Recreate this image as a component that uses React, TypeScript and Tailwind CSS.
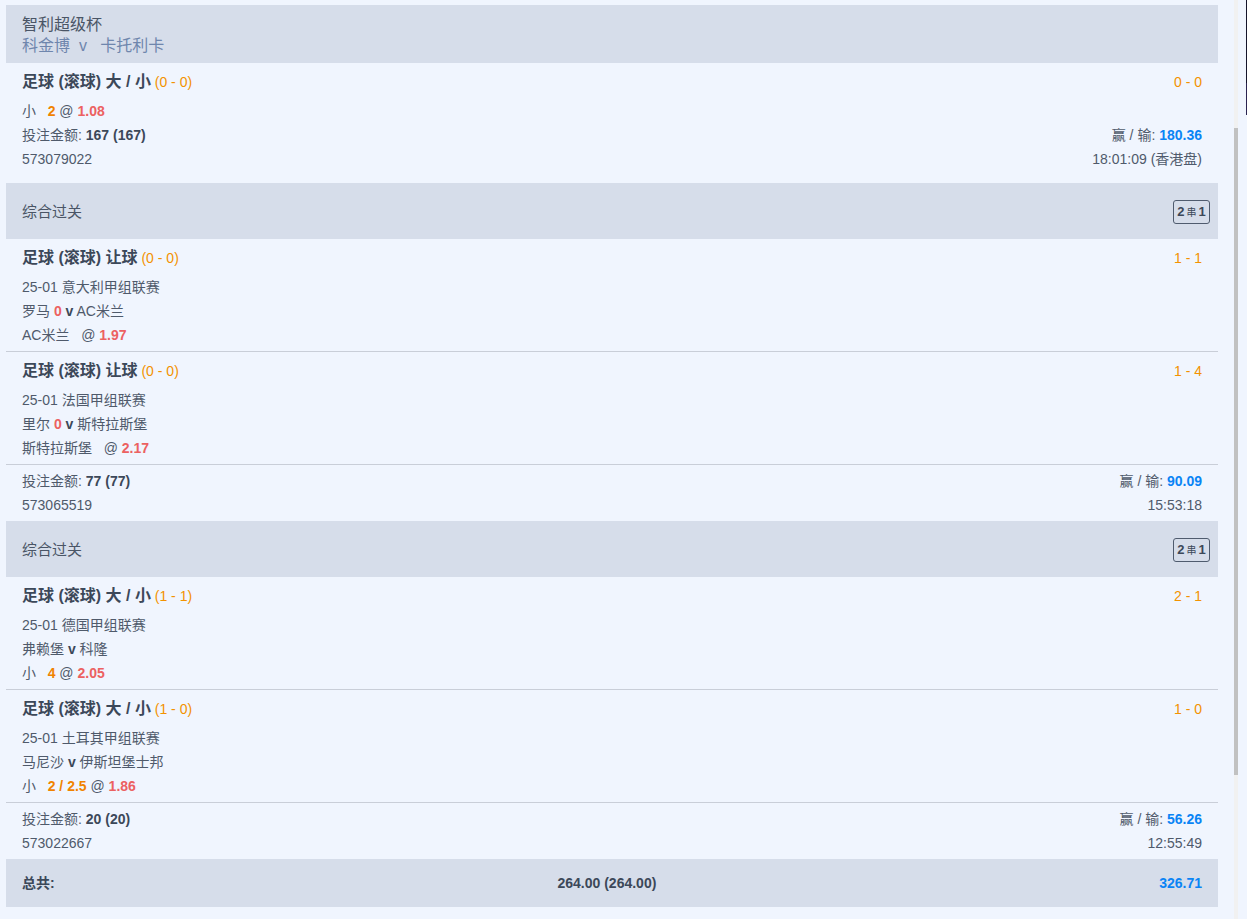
import React from "react";

type Leg = {
  market: string;
  live: string;
  score: string;
  league: string;
  home: string;
  homeGoals: string;
  away: string;
  pick: string;
  line?: string;
  odds: string;
};

type Parlay = {
  legs: Leg[];
  stake: string;
  win: string;
  id: string;
  time: string;
};

const parlays: Parlay[] = [
  {
    legs: [
      { market: "足球 (滚球) 让球", live: "(0 - 0)", score: "1 - 1", league: "25-01 意大利甲组联赛", home: "罗马", homeGoals: "0", away: "AC米兰", pick: "AC米兰", odds: "1.97" },
      { market: "足球 (滚球) 让球", live: "(0 - 0)", score: "1 - 4", league: "25-01 法国甲组联赛", home: "里尔", homeGoals: "0", away: "斯特拉斯堡", pick: "斯特拉斯堡", odds: "2.17" },
    ],
    stake: "77 (77)",
    win: "90.09",
    id: "573065519",
    time: "15:53:18",
  },
  {
    legs: [
      { market: "足球 (滚球) 大 / 小", live: "(1 - 1)", score: "2 - 1", league: "25-01 德国甲组联赛", home: "弗赖堡", homeGoals: "", away: "科隆", pick: "小", line: "4", odds: "2.05" },
      { market: "足球 (滚球) 大 / 小", live: "(1 - 0)", score: "1 - 0", league: "25-01 土耳其甲组联赛", home: "马尼沙", homeGoals: "", away: "伊斯坦堡士邦", pick: "小", line: "2 / 2.5", odds: "1.86" },
    ],
    stake: "20 (20)",
    win: "56.26",
    id: "573022667",
    time: "12:55:49",
  },
];

const Pick = ({ label, line, odds }: { label: string; line?: string; odds: string }) => (
  <span>
    {label}
    {"\u00a0\u00a0\u00a0"}
    {line && <b className="font-bold text-[#f08300]">{line} </b>}
    @ <b className="font-bold text-[#ec6161]">{odds}</b>
  </span>
);

const Title = ({ market, live, score }: { market: string; live: string; score: string }) => (
  <div className="flex h-6 items-center justify-between">
    <div>
      <span className="text-[16px] font-bold text-[#3c4859]">{market}</span>{" "}
      <span className="text-[14px] text-[#f39200]">{live}</span>
    </div>
    <span className="text-[14px] text-[#f39200]">{score}</span>
  </div>
);

const Row = ({ children }: { children: React.ReactNode }) => (
  <div className="flex h-6 items-center justify-between">{children}</div>
);

const Badge = () => (
  <div className="flex h-6 w-[37px] items-center justify-center rounded-[3px] border border-[#4f5b6e] text-[#3c4859]">
    <span className="text-[13px] font-bold">2</span>
    <span className="mx-[2px] text-[10px]">串</span>
    <span className="text-[13px] font-bold">1</span>
  </div>
);

const ParlayBlock = ({ p }: { p: Parlay }) => (
  <div>
    <div className="flex h-14 items-center justify-between bg-[#d6ddea] pl-4 pr-2 pt-[2px] text-[15px] text-[#4a5566]">
      <span>综合过关</span>
      <Badge />
    </div>
    {p.legs.map((leg) => (
      <div key={leg.league} className="border-b border-[#c9ced8] px-4 pt-[7px] pb-1">
        <Title market={leg.market} live={leg.live} score={leg.score} />
        <div className="mt-[5px]">
          <Row>
            <span>{leg.league}</span>
          </Row>
          <Row>
            <span>
              {leg.home}{" "}
              {leg.homeGoals && <b className="font-bold text-[#ec6161]">{leg.homeGoals} </b>}
              <b className="font-bold text-[#3c4859]">v</b> {leg.away}
            </span>
          </Row>
          <Row>
            <Pick label={leg.pick} line={leg.line} odds={leg.odds} />
          </Row>
        </div>
      </div>
    ))}
    <div className="px-4 pt-1 pb-1">
      <Row>
        <span>
          投注金额: <b className="font-bold text-[#3c4859]">{p.stake}</b>
        </span>
        <span>
          赢 / 输: <b className="font-bold text-[#0a84f5]">{p.win}</b>
        </span>
      </Row>
      <Row>
        <span>{p.id}</span>
        <span>{p.time}</span>
      </Row>
    </div>
  </div>
);

export default function App() {
  return (
    <div className="flex h-[919px] overflow-hidden bg-[#f0f5fe] text-[14px] text-[#4f5a6b] [font-family:'Liberation_Sans','Noto_Sans_CJK_SC',sans-serif]">
      <div className="w-[1234px] shrink-0 pl-[6px] pr-[16px] pt-[5px]">
        {/* single bet */}
        <div>
          <div className="flex h-[58px] flex-col justify-center bg-[#d6ddea] px-4 pt-[2px] text-[16px] leading-[21px]">
            <span className="text-[#4a5566]">智利超级杯</span>
            <span className="text-[#6f86ad]">
              科金博{"\u00a0\u00a0"}v{"\u00a0\u00a0\u00a0"}卡托利卡
            </span>
          </div>
          <div className="px-4 pt-[7px] pb-3">
            <Title market="足球 (滚球) 大 / 小" live="(0 - 0)" score="0 - 0" />
            <div className="mt-[5px]">
              <Row>
                <Pick label="小" line="2" odds="1.08" />
              </Row>
              <Row>
                <span>
                  投注金额: <b className="font-bold text-[#3c4859]">167 (167)</b>
                </span>
                <span>
                  赢 / 输: <b className="font-bold text-[#0a84f5]">180.36</b>
                </span>
              </Row>
              <Row>
                <span>573079022</span>
                <span>18:01:09 (香港盘)</span>
              </Row>
            </div>
          </div>
        </div>

        {parlays.map((p) => (
          <ParlayBlock key={p.id} p={p} />
        ))}

        {/* totals */}
        <div className="flex h-12 items-center justify-between bg-[#d6ddea] px-4 text-[14px] font-bold text-[#3c4859]">
          <span>总共:</span>
          <span>264.00 (264.00)</span>
          <span className="text-[#0a84f5]">326.71</span>
        </div>
      </div>

      {/* scrollbar */}
      <div className="flex w-[4px] shrink-0 flex-col bg-[#f1f1f1]">
        <div className="h-[128px]" />
        <div className="h-[647px] bg-[#c1c1c1]" />
      </div>
      <div className="w-[8px] shrink-0" />
      <div className="flex w-[1px] shrink-0 flex-col">
        <div className="h-[83px] bg-[#14142a]" />
        <div className="h-[32px] bg-[#2a2350]" />
      </div>
    </div>
  );
}
